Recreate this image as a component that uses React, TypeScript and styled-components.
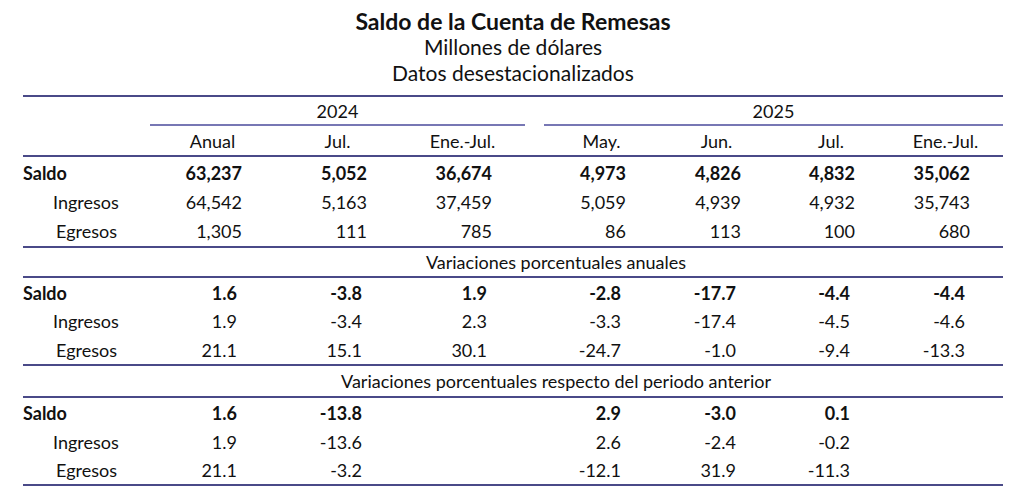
import React from "react";
import styled, { createGlobalStyle } from "styled-components";

const GlobalStyle = createGlobalStyle`
  html, body {
    margin: 0;
    padding: 0;
    background: #ffffff;
  }
  body {
    font-family: "Lato", "Liberation Sans", sans-serif;
    color: #111111;
  }
`;

const RULE = "#4a4a88";
const YEAR_RULE = "#7777b4";
const COLS = "127px 125px 125px 125px 19px 115px 115px 114px 115px";

const Page = styled.div`
  width: 1024px;
  height: 499px;
  padding-left: 23px;
  box-sizing: border-box;
`;

const Heading = styled.header`
  width: 980px;
  text-align: center;
  padding-top: 8px;
  padding-bottom: 9px;
`;

const Title = styled.div`
  font-size: 23px;
  font-weight: 700;
  line-height: 26px;
`;

const Subtitle = styled.div`
  font-size: 21px;
  line-height: 26px;
`;

const Table = styled.div`
  width: 980px;
  border-top: 2px solid ${RULE};
`;

const Row = styled.div<{ $h: number; $rule?: boolean }>`
  display: grid;
  grid-template-columns: ${COLS};
  height: ${(p) => p.$h}px;
  align-items: center;
  font-size: 18px;
  border-bottom: ${(p) => (p.$rule ? `2px solid ${RULE}` : "none")};
`;

const YearRow = styled.div`
  display: grid;
  grid-template-columns: ${COLS};
  height: 28px;
  font-size: 18px;
  padding-top: 1px;
`;

const YearCell = styled.div<{ $from: number; $to: number }>`
  grid-column: ${(p) => p.$from} / ${(p) => p.$to};
  display: flex;
  align-items: center;
  justify-content: center;
  border-bottom: 2px solid ${YEAR_RULE};
`;

const HeadCell = styled.div`
  text-align: center;
`;

const Label = styled.div<{ $indent: number; $bold?: boolean }>`
  padding-left: ${(p) => p.$indent}px;
  font-weight: ${(p) => (p.$bold ? 700 : 400)};
`;

const Value = styled.div<{ $bold?: boolean; $pct?: boolean; $skip?: boolean }>`
  text-align: right;
  padding-right: ${(p) => (p.$pct ? 38 : 33)}px;
  font-weight: ${(p) => (p.$bold ? 700 : 400)};
  grid-column: ${(p) => (p.$skip ? "span 2" : "auto")};
`;

const Section = styled.div<{ $h: number }>`
  height: ${(p) => p.$h}px;
  display: flex;
  align-items: center;
  justify-content: center;
  padding-left: 86px;
  font-size: 18px;
  border-bottom: 2px solid ${RULE};
`;

const Block = styled.div<{ $pad: number }>`
  padding-top: ${(p) => p.$pad}px;
  border-bottom: 2px solid ${RULE};
`;

type Line = { label: string; indent: number; bold?: boolean; values: string[] };

const levels: Line[] = [
  { label: "Saldo", indent: 0, bold: true, values: ["63,237", "5,052", "36,674", "4,973", "4,826", "4,832", "35,062"] },
  { label: "Ingresos", indent: 30, values: ["64,542", "5,163", "37,459", "5,059", "4,939", "4,932", "35,743"] },
  { label: "Egresos", indent: 33, values: ["1,305", "111", "785", "86", "113", "100", "680"] },
];

const annual: Line[] = [
  { label: "Saldo", indent: 0, bold: true, values: ["1.6", "-3.8", "1.9", "-2.8", "-17.7", "-4.4", "-4.4"] },
  { label: "Ingresos", indent: 30, values: ["1.9", "-3.4", "2.3", "-3.3", "-17.4", "-4.5", "-4.6"] },
  { label: "Egresos", indent: 33, values: ["21.1", "15.1", "30.1", "-24.7", "-1.0", "-9.4", "-13.3"] },
];

const previous: Line[] = [
  { label: "Saldo", indent: 0, bold: true, values: ["1.6", "-13.8", "", "2.9", "-3.0", "0.1", ""] },
  { label: "Ingresos", indent: 30, values: ["1.9", "-13.6", "", "2.6", "-2.4", "-0.2", ""] },
  { label: "Egresos", indent: 33, values: ["21.1", "-3.2", "", "-12.1", "31.9", "-11.3", ""] },
];

const DataRow = ({ line, pct, h }: { line: Line; pct?: boolean; h: number }) => (
  <Row $h={h}>
    <Label $indent={line.indent} $bold={line.bold}>
      {line.label}
    </Label>
    {line.values.map((v, i) => (
      <Value key={i} $bold={line.bold} $pct={pct} $skip={i === 3}>
        {v}
      </Value>
    ))}
  </Row>
);

export default function App() {
  return (
    <Page>
      <GlobalStyle />
      <Heading>
        <Title>Saldo de la Cuenta de Remesas</Title>
        <Subtitle>Millones de dólares</Subtitle>
        <Subtitle>Datos desestacionalizados</Subtitle>
      </Heading>
      <Table>
        <YearRow>
          <YearCell $from={2} $to={5}>2024</YearCell>
          <YearCell $from={6} $to={10}>2025</YearCell>
        </YearRow>
        <Row $h={29} $rule>
          <div />
          <HeadCell>Anual</HeadCell>
          <HeadCell>Jul.</HeadCell>
          <HeadCell>Ene.-Jul.</HeadCell>
          <div />
          <HeadCell>May.</HeadCell>
          <HeadCell>Jun.</HeadCell>
          <HeadCell>Jul.</HeadCell>
          <HeadCell>Ene.-Jul.</HeadCell>
        </Row>
        <Block $pad={1}>
          {levels.map((l) => (
            <DataRow key={l.label} line={l} h={29.3} />
          ))}
        </Block>
        <Section $h={28}>Variaciones porcentuales anuales</Section>
        <Block $pad={1}>
          {annual.map((l) => (
            <DataRow key={l.label} line={l} pct h={28.3} />
          ))}
        </Block>
        <Section $h={30}>Variaciones porcentuales respecto del periodo anterior</Section>
        <Block $pad={1}>
          {previous.map((l) => (
            <DataRow key={l.label} line={l} pct h={28.5} />
          ))}
        </Block>
      </Table>
    </Page>
  );
}
